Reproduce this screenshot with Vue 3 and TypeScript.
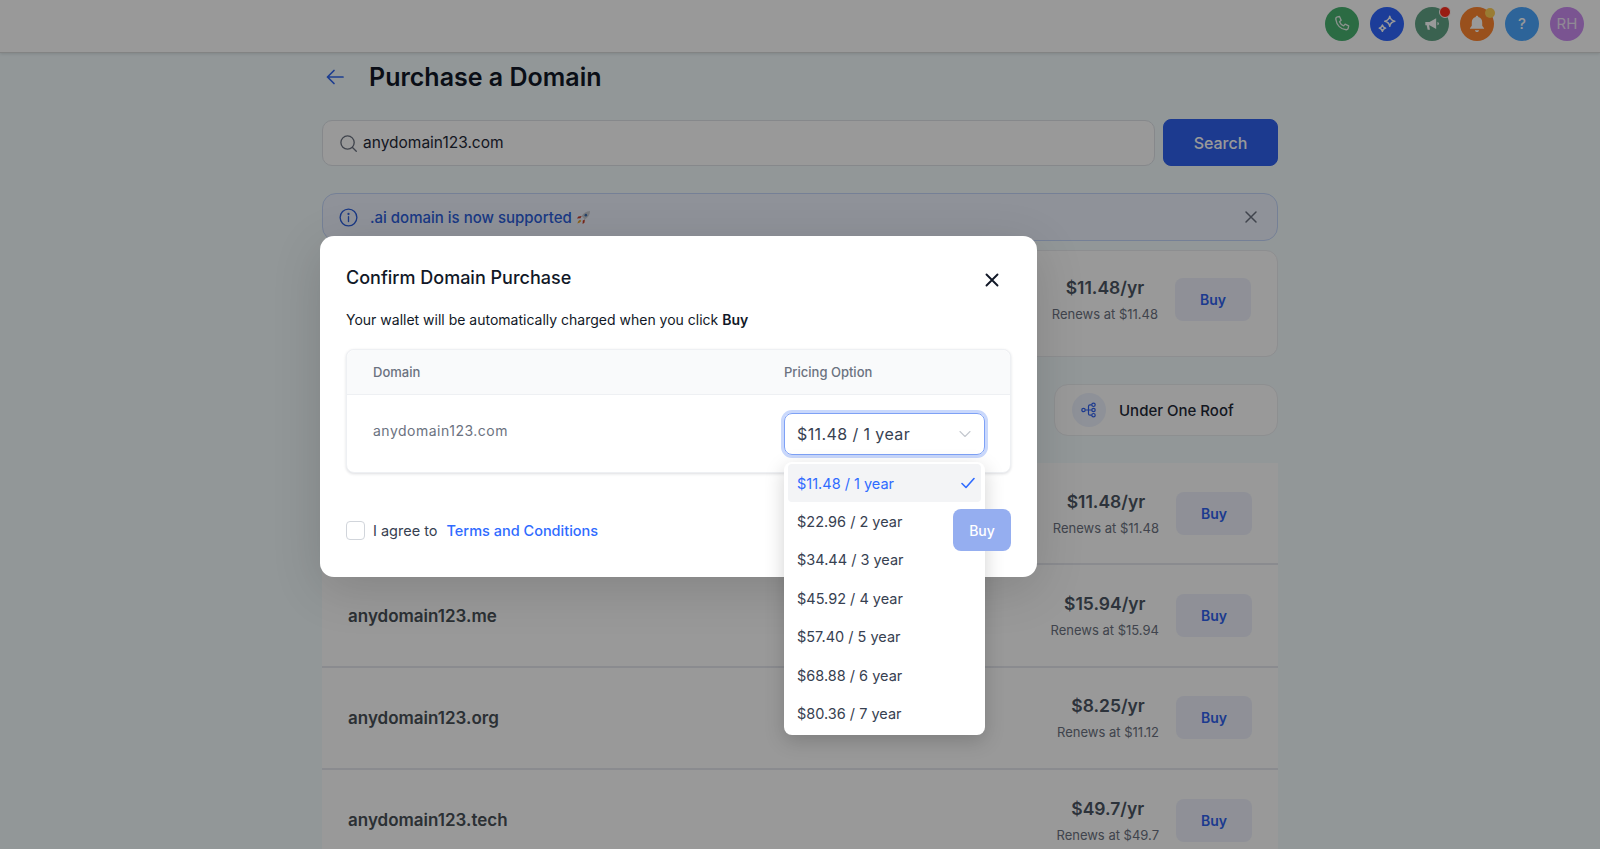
<script setup lang="ts">
interface Row { domain: string; price: string; renews: string }
const rows: Row[] = [
  { domain: '', price: '$11.48/yr', renews: 'Renews at $11.48' },
  { domain: 'anydomain123.me', price: '$15.94/yr', renews: 'Renews at $15.94' },
  { domain: 'anydomain123.org', price: '$8.25/yr', renews: 'Renews at $11.12' },
  { domain: 'anydomain123.tech', price: '$49.7/yr', renews: 'Renews at $49.7' },
]
const options: string[] = [
  '$11.48 / 1 year', '$22.96 / 2 year', '$34.44 / 3 year', '$45.92 / 4 year',
  '$57.40 / 5 year', '$68.88 / 6 year', '$80.36 / 7 year',
]
</script>

<template>
  <div class="page">
    <header class="topbar">
      <span class="round phone">
        <svg viewBox="0 0 24 24" width="20" height="20" fill="none" stroke="currentColor" stroke-width="1.6" stroke-linejoin="round"><path d="M6.5 3.5 9 3l2 4.5-2 1.7c.9 2.300 2.700 4.100 5 5l1.700-2 4.300 2-.5 2.800c-.2 1.200-1.300 2-2.500 1.900C10.500 18.300 5.600 13.400 4.600 6.400 4.400 5 5.200 3.800 6.500 3.500Z"/></svg>
      </span>
      <span class="round stars">
        <svg viewBox="0 0 24 24" width="22" height="22" fill="none" stroke="currentColor" stroke-width="1.6" stroke-linejoin="round"><path d="M15 3.500c.6 3.300 2.200 4.900 5.500 5.500-3.300.6-4.900 2.200-5.500 5.500-.6-3.300-2.200-4.900-5.500-5.500 3.300-.6 4.900-2.200 5.500-5.500Z"/><path d="M7 13c.4 2 1.500 3.100 3.500 3.500-2 .4-3.100 1.500-3.500 3.500-.4-2-1.500-3.100-3.500-3.500 2-.4 3.100-1.500 3.500-3.500Z"/></svg>
      </span>
      <span class="round mega">
        <svg viewBox="0 0 24 24" width="20" height="20" fill="currentColor"><path d="M4 9.500h5l8-4.500v13l-8-4.500H8.500l1 5.500H6.800L5.600 13.500H4Z"/><path d="M18.500 9.500c1.300.3 1.800 1.200 1.800 2s-.5 1.700-1.800 2Z"/></svg>
        <i class="dot red"></i>
      </span>
      <span class="round bell">
        <svg viewBox="0 0 24 24" width="22" height="22" fill="currentColor"><path d="M12 3c.8 0 1.400.6 1.400 1.300 2.900.7 4.300 3 4.300 6v3.500l2 2.700v.7H4.300v-.7l2-2.700v-3.500c0-3 1.400-5.300 4.300-6C10.600 3.600 11.200 3 12 3Z"/><path d="M9.700 18.800h4.600c-.2 1.200-1.100 2-2.300 2s-2.100-.8-2.300-2Z"/></svg>
        <i class="dot amber"></i>
      </span>
      <span class="round help">?</span>
      <span class="round avatar">RH</span>
    </header>

    <main class="content">
      <div class="title-row">
        <svg class="back" viewBox="0 0 18 16" width="18" height="16" fill="none" stroke="currentColor" stroke-width="1.700" stroke-linecap="round" stroke-linejoin="round"><path d="M17 8H1.500M8 1.500 1.500 8 8 14.500"/></svg>
        <h1>Purchase a Domain</h1>
      </div>

      <div class="search-row">
        <div class="search">
          <svg viewBox="0 0 20 20" width="19" height="19" fill="none" stroke="currentColor" stroke-width="1.400" stroke-linecap="round"><circle cx="9" cy="9" r="7"/><path d="m14.200 14.200 4 4"/></svg>
          <span>anydomain123.com</span>
        </div>
        <button class="search-btn" type="button">Search</button>
      </div>

      <div class="alert">
        <svg class="info" viewBox="0 0 20 20" width="19" height="19" fill="none" stroke="currentColor" stroke-width="1.400" stroke-linecap="round"><circle cx="10" cy="10" r="8.800"/><path d="M10 9.200v5"/><circle cx="10" cy="6.300" r=".5" fill="currentColor"/></svg>
        <span class="alert-text">.ai domain is now supported</span>
        <svg class="rocket" viewBox="0 0 16 16" width="15" height="15"><path d="M15 1c-4 .2-7 2-9 5.500l3.500 3.500C13 8 14.800 5 15 1Z" fill="#c9ccd2"/><circle cx="10.500" cy="5.500" r="1.400" fill="#3f6fb0"/><path d="M6 6.500 2.500 7 1 9l3.800-.2ZM9.500 10l-.5 3.500L7 15l.2-3.800Z" fill="#c8402c"/><path d="M4.500 10.500C3 11 2 12.500 1.500 14.500c2-.5 3.500-1.500 4-3Z" fill="#e8a42c"/></svg>
        <svg class="alert-x" viewBox="0 0 14 14" width="14" height="14" fill="none" stroke="currentColor" stroke-width="1.500" stroke-linecap="round"><path d="m2 2 10 10M12 2 2 12"/></svg>
      </div>

      <section class="card">
        <div class="price-box">
          <div class="price">{{ rows[0].price }}</div>
          <div class="renews">{{ rows[0].renews }}</div>
        </div>
        <button class="buy" type="button">Buy</button>
      </section>

      <div class="tabs">
        <div class="tab">
          <span class="tab-icon">
            <svg viewBox="0 0 16 16" width="16" height="16" fill="none" stroke="currentColor" stroke-width="1.200"><circle cx="2.500" cy="8" r="1.700"/><circle cx="12.500" cy="2.800" r="1.700"/><circle cx="12.500" cy="8" r="1.700"/><circle cx="12.500" cy="13.200" r="1.700"/><path d="M4.200 8h6.600M7.500 8V4.300c0-.9.600-1.500 1.500-1.500h1.800M7.500 8v3.700c0 .9.600 1.500 1.500 1.500h1.800"/></svg>
          </span>
          <span>Under One Roof</span>
        </div>
      </div>

      <section class="list">
        <div v-for="row in rows" :key="row.price" class="row">
          <span v-if="row.domain" class="domain">{{ row.domain }}</span>
          <div class="price-box">
            <div class="price">{{ row.price }}</div>
            <div class="renews">{{ row.renews }}</div>
          </div>
          <button class="buy" type="button">Buy</button>
        </div>
      </section>
    </main>

    <div class="scrim"></div>

    <div class="modal" role="dialog">
      <div class="modal-head">
        <h2>Confirm Domain Purchase</h2>
        <svg class="close" viewBox="0 0 14 14" width="14" height="14" fill="none" stroke="currentColor" stroke-width="1.900" stroke-linecap="round"><path d="m1.500 1.500 11 11M12.500 1.500l-11 11"/></svg>
      </div>
      <p class="wallet">Your wallet will be automatically charged when you click <b>Buy</b></p>

      <div class="table">
        <div class="thead">
          <span class="col-a">Domain</span>
          <span>Pricing Option</span>
        </div>
        <div class="tbody">
          <span class="col-a td-domain">anydomain123.com</span>
          <div class="select-wrap">
            <div class="select">
              <span>$11.48 / 1 year</span>
              <svg viewBox="0 0 12 8" width="12" height="8" fill="none" stroke="#c4c8cf" stroke-width="1.100" stroke-linecap="round" stroke-linejoin="round"><path d="m1 1.500 5 5 5-5"/></svg>
            </div>
            <ul class="menu">
              <li v-for="(o, i) in options" :key="o" :class="{ active: i === 0 }">
                <span>{{ o }}</span>
                <svg v-if="i === 0" viewBox="0 0 14 12" width="14" height="12" fill="none" stroke="currentColor" stroke-width="1.600" stroke-linecap="round" stroke-linejoin="round"><path d="m1 6.500 4 4L13 1.500"/></svg>
              </li>
            </ul>
          </div>
        </div>
      </div>

      <div class="modal-foot">
        <span class="checkbox"></span>
        <span class="agree">I agree to</span>
        <a class="terms">Terms and Conditions</a>
        <button class="confirm" type="button">Buy</button>
      </div>
    </div>
  </div>
</template>

<style scoped>
.page {
  position: relative;
  height: 849px;
  overflow: hidden;
  background: #f3fcfe;
  font-family: Inter, "Liberation Sans", sans-serif;
  color: #111827;
}
.topbar {
  height: 53px;
  box-sizing: border-box;
  background: #fff;
  border-bottom: 1px solid #d9dadb;
  box-shadow: 0 1px 3px rgba(0, 0, 0, .12);
  display: flex;
  justify-content: flex-end;
  align-items: center;
  gap: 11px;
  padding: 0 16px 5px 0;
}
.round {
  position: relative;
  width: 34px;
  height: 34px;
  border-radius: 50%;
  display: flex;
  align-items: center;
  justify-content: center;
  color: #fff;
  font-size: 15px;
}
.phone { background: #48b271; color: #e8f4ec; }
.stars { background: #2f67ff; }
.mega { background: #62a385; }
.bell { background: #ff852f; }
.help { background: #4ba7ff; font-weight: 500; }
.avatar { background: #cb8cf2; color: #f0e4f8; }
.dot {
  position: absolute;
  top: 1px;
  right: -1px;
  width: 10px;
  height: 10px;
  border-radius: 50%;
}
.red { background: #ff2f21; border: 1px solid #fff; top: -1px; right: -2px; }
.amber { background: #ffcf55; }

.content {
  width: 956px;
  margin: 0 auto;
  padding-top: 4px;
}
.title-row {
  height: 40px;
  display: flex;
  align-items: center;
}
.back { color: #2f67f0; margin-left: 4px; }
h1 {
  margin: 0 0 0 25px;
  font-size: 25px;
  font-weight: 600;
  color: #111827;
}
.search-row {
  display: flex;
  align-items: flex-end;
  gap: 8px;
  margin-top: 22px;
}
.search {
  flex: 1;
  height: 46px;
  box-sizing: border-box;
  display: flex;
  align-items: center;
  gap: 5px;
  padding-left: 16px;
  background: #fff;
  border: 1px solid #dfe3e8;
  border-radius: 10px;
  color: #6b7280;
}
.search span {
  color: #1f2937;
  font-size: 15.500px;
  margin-top: -2px;
}
.search-btn {
  width: 115px;
  height: 47px;
  border: 1px solid #2f61ee;
  border-radius: 8px;
  background: #3061ee;
  color: #fff;
  font: 500 16px Inter, sans-serif;
}
.alert {
  position: relative;
  height: 48px;
  box-sizing: border-box;
  margin-top: 27px;
  display: flex;
  align-items: center;
  padding-left: 16px;
  background: #eff4ff;
  border: 1px solid #c3d6fb;
  border-radius: 14px;
  color: #2c5fdd;
}
.alert-text {
  margin-left: 12px;
  font-size: 15px;
  font-weight: 500;
}
.rocket { margin-left: 4px; }
.alert-x {
  position: absolute;
  right: 19px;
  top: 16px;
  color: #6b7280;
}
.card {
  margin-top: 9px;
  height: 107px;
  box-sizing: border-box;
  display: flex;
  align-items: center;
  justify-content: flex-end;
  padding: 0 26px 9px 0;
  background: #fff;
  border: 1px solid #ebedf0;
  border-radius: 12px;
}
.tabs {
  margin-top: 27px;
  display: flex;
  justify-content: flex-end;
}
.tab {
  width: 224px;
  height: 52px;
  box-sizing: border-box;
  display: flex;
  align-items: center;
  gap: 13px;
  padding-left: 17px;
  background: #fff;
  border: 1px solid #eceef1;
  border-radius: 14px;
  font-size: 15px;
  font-weight: 500;
  color: #1f2937;
}
.tab-icon {
  width: 34px;
  height: 34px;
  border-radius: 50%;
  background: #edf2fd;
  color: #3061ee;
  display: flex;
  align-items: center;
  justify-content: center;
}
.list {
  margin-top: 27px;
  background: #fff;
}
.row {
  height: 102.400px;
  box-sizing: border-box;
  display: flex;
  align-items: center;
  justify-content: flex-end;
  padding: 0 26px 0 26px;
  border-bottom: 2px solid #e7e8ee;
}
.domain {
  margin-right: auto;
  font-size: 17px;
  font-weight: 600;
  color: #495057;
}
.price-box {
  text-align: center;
  margin-right: 17px;
}
.price {
  font-size: 17.500px;
  font-weight: 600;
  color: #4b5563;
  line-height: 24px;
}
.renews {
  margin-top: 5px;
  font-size: 13px;
  line-height: 18px;
  color: #6b7280;
}
.buy {
  width: 76px;
  height: 43px;
  border: 0;
  border-radius: 8px;
  background: #eef1fc;
  color: #3061ee;
  font: 600 14px Inter, sans-serif;
}
.scrim {
  position: absolute;
  inset: 0;
  background: rgba(0, 0, 0, .4);
}
.modal {
  position: absolute;
  left: 320px;
  top: 236px;
  width: 717px;
  box-sizing: border-box;
  padding: 26px;
  background: #fff;
  border-radius: 14px;
  box-shadow: 0 12px 50px rgba(0, 0, 0, .14);
}
.modal-head {
  display: flex;
  align-items: center;
  justify-content: space-between;
  height: 30px;
}
h2 {
  margin: 0;
  font-size: 18px;
  font-weight: 500;
  color: #111827;
}
.close {
  color: #111827;
  margin: 6px 12px 0 0;
}
.wallet {
  margin: 18px 0 0;
  font-size: 14px;
  line-height: 20px;
  color: #111827;
}
.wallet b { font-weight: 600; }
.table {
  margin-top: 19px;
  height: 124px;
  box-sizing: border-box;
  border: 1px solid #eef0f3;
  border-radius: 8px;
  box-shadow: 0 1px 3px rgba(16, 24, 40, .14);
  background: #fff;
}
.thead {
  height: 45px;
  box-sizing: border-box;
  display: grid;
  grid-template-columns: 1fr 226px;
  align-items: center;
  background: #f9fafb;
  border-bottom: 1px solid #eef0f3;
  border-radius: 8px 8px 0 0;
  font-size: 13px;
  font-weight: 500;
  color: #6b7280;
}
.col-a { padding-left: 26px; }
.tbody {
  display: grid;
  grid-template-columns: 1fr 226px;
  padding-top: 18px;
}
.td-domain {
  font-size: 14px;
  letter-spacing: .5px;
  line-height: 36px;
  color: #6b7280;
}
.select-wrap {
  position: relative;
  width: 201px;
}
.select {
  height: 42px;
  box-sizing: border-box;
  display: flex;
  align-items: center;
  justify-content: space-between;
  padding: 0 13px 0 12px;
  border: 1px solid #7ea1f6;
  border-radius: 8px;
  box-shadow: 0 0 0 3px #c9d8fc;
  font-size: 16px;
  letter-spacing: .4px;
  color: #374151;
}
.menu {
  position: absolute;
  left: 0;
  top: 49px;
  width: 201px;
  box-sizing: border-box;
  margin: 0;
  padding: 2px 4px;
  list-style: none;
  background: #fff;
  border-radius: 8px;
  box-shadow: 0 6px 20px rgba(0, 0, 0, .18);
}
.menu li {
  height: 38.400px;
  box-sizing: border-box;
  display: flex;
  align-items: center;
  justify-content: space-between;
  padding: 0 6px 0 9px;
  border-radius: 4px;
  font-size: 14.500px;
  color: #374151;
}
.menu li.active {
  background: #f3f4f6;
  color: #2f6bff;
}
.modal-foot {
  position: relative;
  margin-top: 36px;
  height: 42px;
  display: flex;
  align-items: center;
}
.checkbox {
  width: 19px;
  height: 19px;
  box-sizing: border-box;
  border: 1px solid #d1d5db;
  border-radius: 4px;
}
.agree {
  margin-left: 8px;
  font-size: 14.500px;
  color: #374151;
}
.terms {
  margin-left: 9px;
  font-size: 14.500px;
  font-weight: 500;
  color: #2f6bff;
}
.confirm {
  margin-left: auto;
  width: 58px;
  height: 42px;
  border: 0;
  border-radius: 8px;
  background: #95aef0;
  color: #fff;
  font: 500 14px Inter, sans-serif;
}
</style>
